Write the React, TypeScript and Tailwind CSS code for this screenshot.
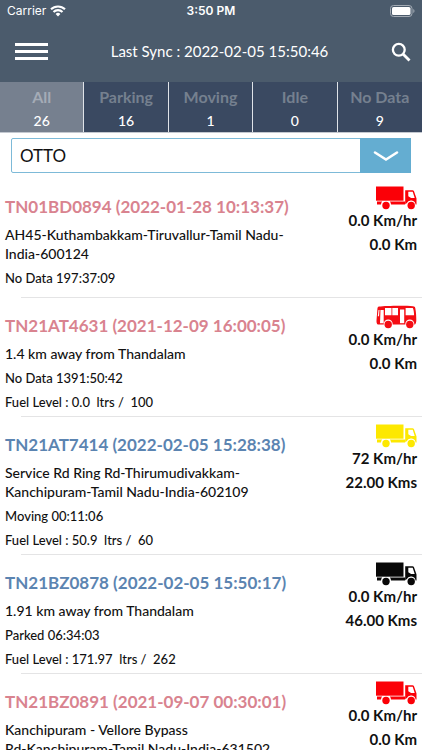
import { useState } from "react";
import clsx from "clsx";

type Vehicle = {
  id: string;
  time: string;
  address: string;
  status?: string;
  fuel?: string;
  speed: string;
  distance: string;
  icon: "truck" | "bus";
  iconColor: string;
  active: boolean;
};

const tabs = [
  { label: "All", count: 26 },
  { label: "Parking", count: 16 },
  { label: "Moving", count: 1 },
  { label: "Idle", count: 0 },
  { label: "No Data", count: 9 },
];

const vehicles: Vehicle[] = [
  {
    id: "TN01BD0894",
    time: "2022-01-28 10:13:37",
    address: "AH45-Kuthambakkam-Tiruvallur-Tamil Nadu-\nIndia-600124",
    status: "No Data 197:37:09",
    speed: "0.0 Km/hr",
    distance: "0.0 Km",
    icon: "truck",
    iconColor: "text-[#fb0007]",
    active: false,
  },
  {
    id: "TN21AT4631",
    time: "2021-12-09 16:00:05",
    address: "1.4 km away from Thandalam",
    status: "No Data 1391:50:42",
    fuel: "Fuel Level : 0.0  ltrs /  100",
    speed: "0.0 Km/hr",
    distance: "0.0 Km",
    icon: "bus",
    iconColor: "text-[#f40d14]",
    active: false,
  },
  {
    id: "TN21AT7414",
    time: "2022-02-05 15:28:38",
    address: "Service Rd Ring Rd-Thirumudivakkam-\nKanchipuram-Tamil Nadu-India-602109",
    status: "Moving 00:11:06",
    fuel: "Fuel Level : 50.9  ltrs /  60",
    speed: "72 Km/hr",
    distance: "22.00 Kms",
    icon: "truck",
    iconColor: "text-[#fde800]",
    active: true,
  },
  {
    id: "TN21BZ0878",
    time: "2022-02-05 15:50:17",
    address: "1.91 km away from Thandalam",
    status: "Parked 06:34:03",
    fuel: "Fuel Level : 171.97  ltrs /  262",
    speed: "0.0 Km/hr",
    distance: "46.00 Kms",
    icon: "truck",
    iconColor: "text-[#080808]",
    active: true,
  },
  {
    id: "TN21BZ0891",
    time: "2021-09-07 00:30:01",
    address: "Kanchipuram - Vellore Bypass\nRd-Kanchipuram-Tamil Nadu-India-631502",
    speed: "0.0 Km/hr",
    distance: "0.0 Km",
    icon: "truck",
    iconColor: "text-[#fb0007]",
    active: false,
  },
];

function TruckIcon({ className }: { className?: string }) {
  return (
    <svg viewBox="0 0 41 24" className={className} fill="currentColor">
      <path d="M0 .5h27.5v14.2H0z" />
      <path d="M1 15.600h5.200a4.600 4.600 0 0 0-1.200 2.900H1zM13.800 15.600h15.400v2.900H15a4.600 4.600 0 0 0-1.200-2.900z" />
      <path
        fillRule="evenodd"
        d="M29.200 4.200h7.300c.7 0 1.200.3 1.500 1l2 5.800.5 1.500v6.100h-.9a4.700 4.700 0 0 0-8.900-1.400l-1.500.8zM32.300 5.800v4.400l2.800 1.700h3.600l-2-6.100z"
      />
      <circle cx="10" cy="19.500" r="3.700" />
      <circle cx="35.200" cy="19.500" r="3.700" />
    </svg>
  );
}

function BusIcon({ className }: { className?: string }) {
  return (
    <svg viewBox="0 0 41 24" className={className}>
      <path
        fill="currentColor"
        d="M3 1.600C10 .6 30 .4 37 1.200c1.400.1 2 .6 2.300 2 .8 4 1 8 1 12 0 1.800-.4 3.300-1.300 4.300H1.800C.8 19 .4 17.500.5 15.500L1.400 4c.1-1.500.5-2.200 1.600-2.400z"
      />
      <g fill="#fff">
        <path d="M4.500 5h3.200v13.200H4z" />
        <path d="M2.500 5h1l-.5 6.200H1.800z" />
        <path d="M9 3h6.500v7.200H9zM16.300 3H22v7.200h-5.700z" />
        <path d="M24 4.500h4.200v13.700H24z" />
        <path d="M29.600 3h7.200c.9 2 1.200 4.500 1.300 7.200h-8.500z" />
        <circle cx="12.200" cy="19" r="4.500" />
        <circle cx="33.800" cy="19" r="4.500" />
      </g>
      <g fill="currentColor">
        <circle cx="12.200" cy="19.500" r="3.700" />
        <circle cx="33.800" cy="19.500" r="3.700" />
      </g>
    </svg>
  );
}

function StatusBar() {
  return (
    <div className="grid h-[22px] grid-cols-3 items-center px-[7px] font-['Inter',sans-serif] text-xs text-white">
      <div className="flex items-center gap-1">
        <span>Carrier</span>
        <svg viewBox="0 0 16 12" className="h-3 w-4" fill="none" stroke="currentColor" strokeWidth="2.100">
          <path d="M1 4.300a10 10 0 0 1 14 0M3.500 7a6.400 6.400 0 0 1 9 0" />
          <path d="M8 11.500 5.600 9a3.400 3.400 0 0 1 4.800 0z" fill="currentColor" stroke="none" />
        </svg>
      </div>
      <span className="text-center font-semibold">3:50 PM</span>
      <svg viewBox="0 0 25 12" className="h-3 w-[25px] justify-self-end" fill="none">
        <rect x=".5" y=".5" width="21.500" height="11" rx="3" stroke="#a3abb4" />
        <rect x="2" y="2" width="18.500" height="8" rx="1.600" fill="#fff" />
        <path d="M23.300 4v4c1.600-.7 1.600-3.300 0-4z" fill="#a3abb4" />
      </svg>
    </div>
  );
}

function VehicleRow({ vehicle }: { vehicle: Vehicle }) {
  const Icon = vehicle.icon === "bus" ? BusIcon : TruckIcon;

  return (
    <li>
      <div className="flex min-h-[118px] justify-between px-[5px] pb-1">
        <div className="pt-4 font-medium whitespace-pre">
          <h2
            className={clsx(
              "text-[17px] leading-6 font-bold",
              vehicle.active ? "text-[#5b84b1]" : "text-[#d9838f]"
            )}
          >
            {vehicle.id} ({vehicle.time})
          </h2>
          <p className="mt-1.5 text-sm leading-[19px]">{vehicle.address}</p>
          {vehicle.status && <p className="mt-[5px] text-[13px] leading-5">{vehicle.status}</p>}
          {vehicle.fuel && <p className="mt-1 text-[13px] leading-5">{vehicle.fuel}</p>}
        </div>
        <div className="flex flex-col items-end pt-[7px] text-[15px] leading-5 font-bold whitespace-nowrap">
          <Icon className={clsx("h-6 w-[41px]", vehicle.iconColor)} />
          <p>{vehicle.speed}</p>
          <p className="mt-1">{vehicle.distance}</p>
        </div>
      </div>
      <div className="ml-[21px] h-px bg-[#e4e4e5]" />
    </li>
  );
}

export default function App() {
  const [tab, setTab] = useState("All");
  const [group, setGroup] = useState("OTTO");

  return (
    <div className="flex h-screen flex-col overflow-hidden bg-white font-['Lato',sans-serif] text-[#111]">
      <header className="bg-[#4b5b6c] pb-px text-white">
        <StatusBar />
        <div className="flex h-[59px] items-center justify-between pr-[11px] pl-[15px]">
          <button type="button" aria-label="Menu" className="flex w-[33px] flex-col gap-1">
            <span className="h-[3px] w-full bg-white" />
            <span className="h-[3px] w-full bg-white" />
            <span className="h-[3px] w-full bg-white" />
          </button>
          <h1 className="text-[15px]">Last Sync : 2022-02-05 15:50:46</h1>
          <button type="button" aria-label="Search">
            <svg viewBox="0 0 20 20" className="size-5" fill="none" stroke="currentColor" strokeWidth="2.300">
              <circle cx="7.800" cy="7.800" r="5.900" />
              <path d="m12 12 6.500 6.500" strokeWidth="2.800" />
            </svg>
          </button>
        </div>
      </header>

      <nav className="grid grid-cols-5 border-b border-[#c3c8d0]">
        {tabs.map((t) => (
          <button
            key={t.label}
            type="button"
            onClick={() => setTab(t.label)}
            className={clsx(
              "flex h-[50px] flex-col items-center border-r border-[#dfe3e8] pt-[3px] last:border-r-0",
              tab === t.label ? "bg-[#76808f]" : "bg-[#3a4961]"
            )}
          >
            <span
              className={clsx(
                "text-base leading-6 font-bold",
                tab === t.label ? "text-[#a4abb6]" : "text-[#75808f]"
              )}
            >
              {t.label}
            </span>
            <span className="text-sm leading-6 font-medium text-white">{t.count}</span>
          </button>
        ))}
      </nav>

      <div className="relative mx-[11px] mt-[5px] mb-1.5">
        <select
          aria-label="Group"
          value={group}
          onChange={(e) => setGroup(e.target.value)}
          className="h-[35px] w-full appearance-none rounded-xs border border-[#7dbad8] bg-white pl-2 text-[17px] text-[#111]"
        >
          <option>OTTO</option>
        </select>
        <div className="pointer-events-none absolute inset-y-0 right-0 flex w-[51px] items-center justify-center bg-[#64add1]">
          <svg viewBox="0 0 26 12" className="h-3 w-[26px]" fill="none" stroke="#fff" strokeWidth="2.600" strokeLinecap="round">
            <path d="M2 2.500 13 9.500l11-7" />
          </svg>
        </div>
      </div>

      <ul className="min-h-0 flex-1 overflow-y-auto [scrollbar-width:none]">
        {vehicles.map((v) => (
          <VehicleRow key={v.id} vehicle={v} />
        ))}
      </ul>
    </div>
  );
}
